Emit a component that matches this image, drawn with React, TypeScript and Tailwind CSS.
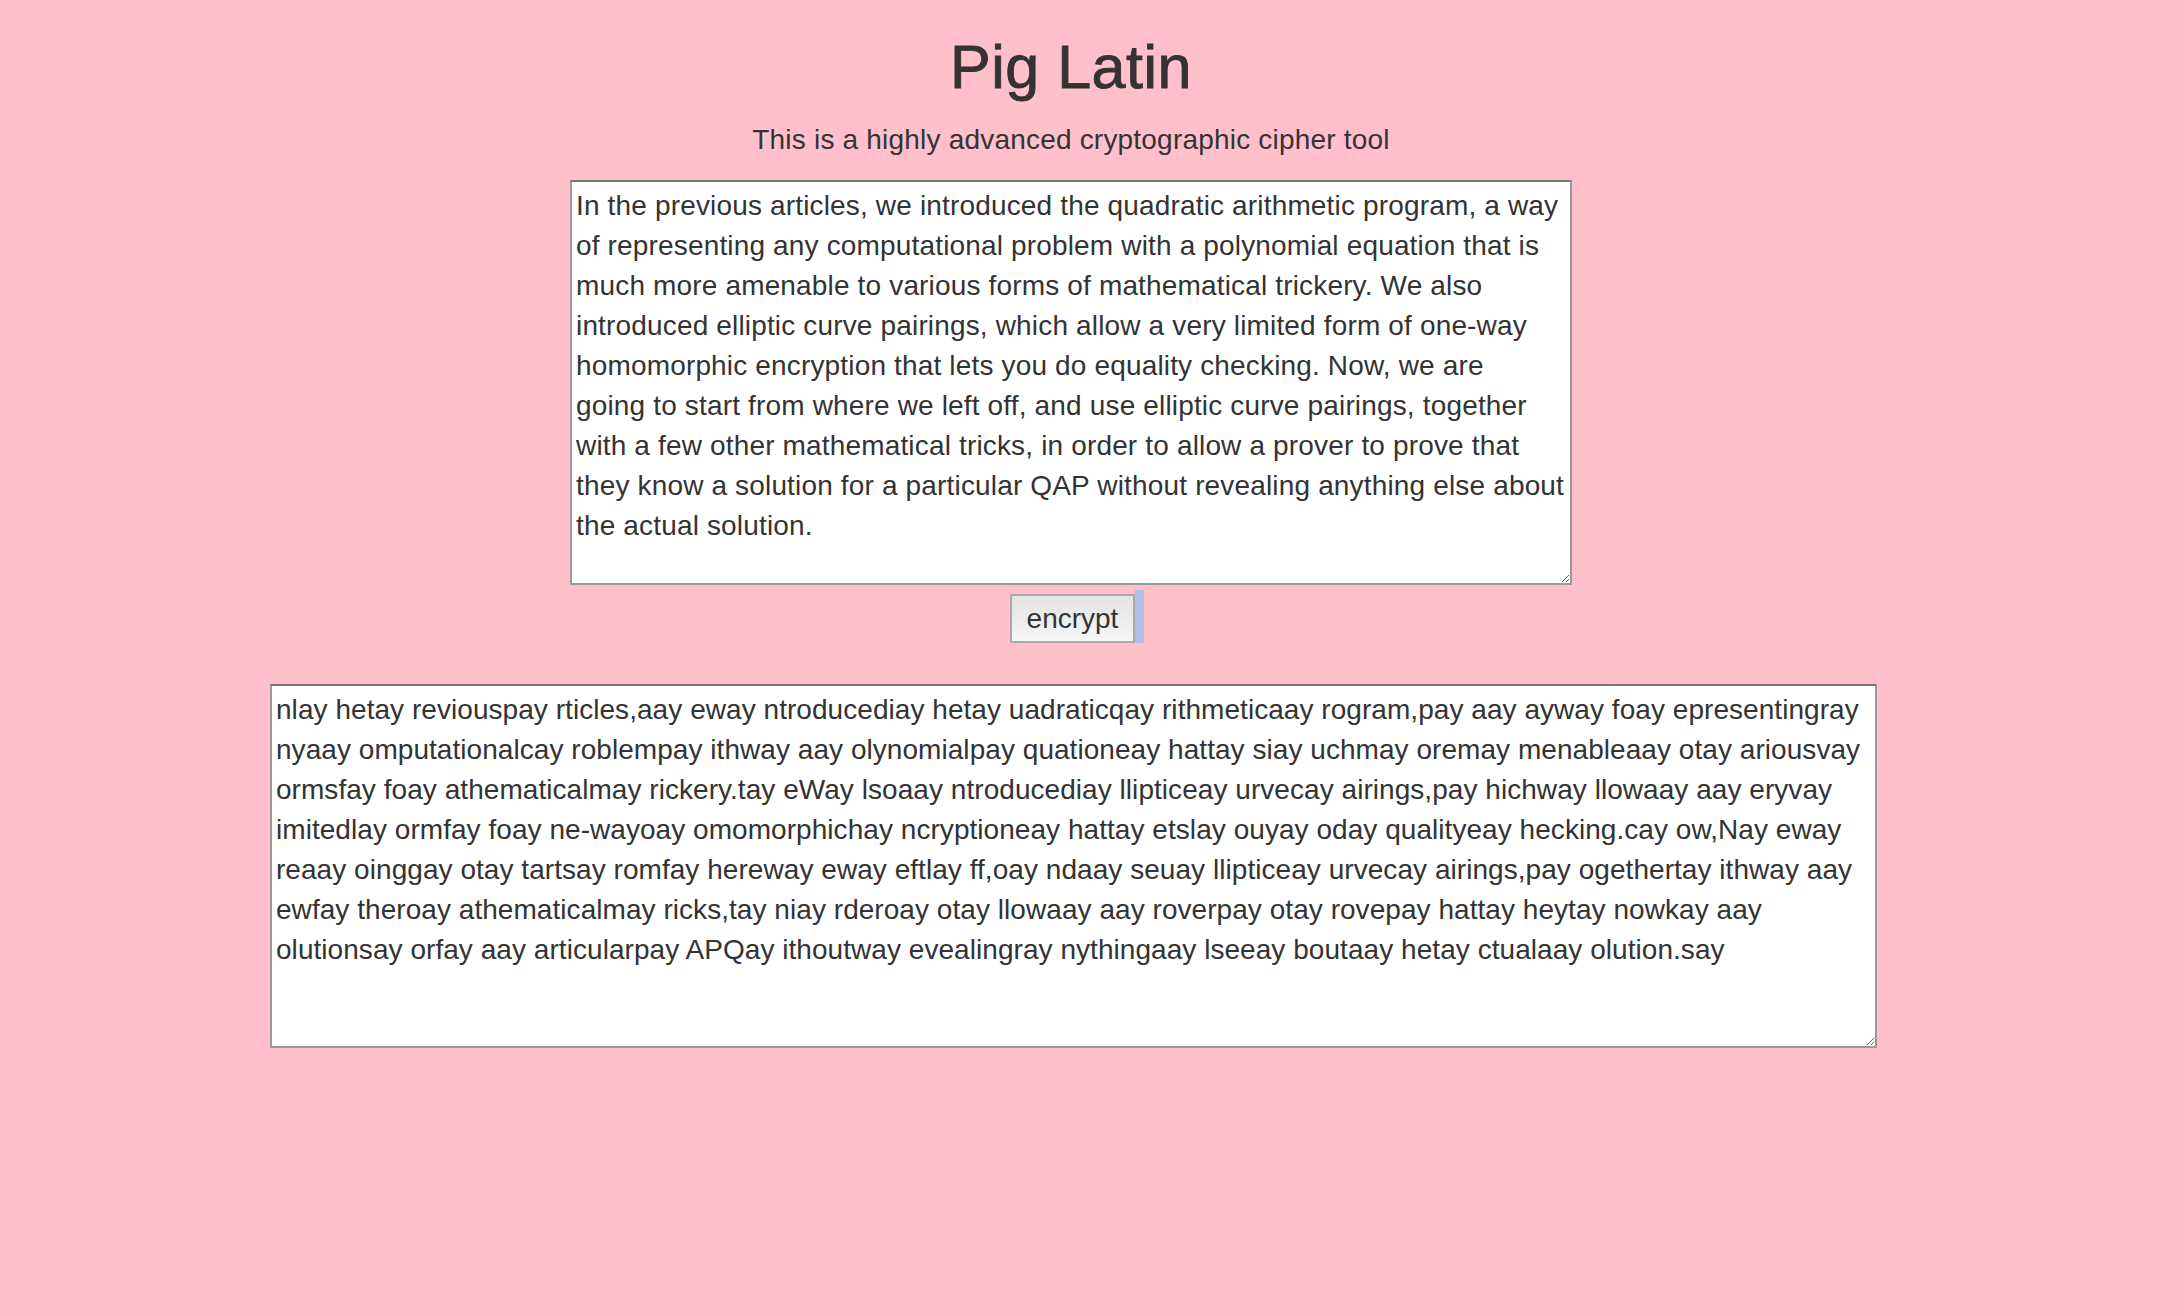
import React from "react";

const INPUT = [
  "In the previous articles, we introduced the quadratic arithmetic program, a way",
  "of representing any computational problem with a polynomial equation that is",
  "much more amenable to various forms of mathematical trickery. We also",
  "introduced elliptic curve pairings, which allow a very limited form of one-way",
  "homomorphic encryption that lets you do equality checking. Now, we are",
  "going to start from where we left off, and use elliptic curve pairings, together",
  "with a few other mathematical tricks, in order to allow a prover to prove that",
  "they know a solution for a particular QAP without revealing anything else about",
  "the actual solution.",
].join("\n");

const OUTPUT =
  "nlay hetay reviouspay rticles,aay eway ntroducediay hetay uadraticqay rithmeticaay rogram,pay aay ayway foay epresentingray nyaay omputationalcay roblempay ithway aay olynomialpay quationeay hattay siay uchmay oremay menableaay otay ariousvay ormsfay foay athematicalmay rickery.tay eWay lsoaay ntroducediay llipticeay urvecay airings,pay hichway llowaay aay eryvay imitedlay ormfay foay ne-wayoay omomorphichay ncryptioneay hattay etslay ouyay oday qualityeay hecking.cay ow,Nay eway reaay oinggay otay tartsay romfay hereway eway eftlay ff,oay ndaay seuay llipticeay urvecay airings,pay ogethertay ithway aay ewfay theroay athematicalmay ricks,tay niay rderoay otay llowaay aay roverpay otay rovepay hattay heytay nowkay aay olutionsay orfay aay articularpay APQay ithoutway evealingray nythingaay lseeay boutaay hetay ctualaay olution.say";

export default function App() {
  return (
    <div
      className="min-h-[1316px] w-full bg-[#ffc0cb] text-[#333333]"
      style={{ fontFamily: '"Liberation Sans", Arial, sans-serif' }}
    >
      <div className="w-[2142px] text-center">
        <h1 className="pt-[34px] text-[61px] leading-[66px] font-normal tracking-[0.5px] [-webkit-text-stroke:0.9px_#333333]">
          Pig Latin
        </h1>
        <p className="mt-[20px] text-[28px] leading-[40px] tracking-[0.2px]">
          This is a highly advanced cryptographic cipher tool
        </p>
        <textarea
          className="mx-auto mt-[20px] block h-[405px] w-[1002px] border-2 border-[#9a9a9a] border-t-[#777777] bg-white p-[4px] text-left text-[28px] leading-[40px] tracking-[0.16px] text-[#333333] outline-none"
          style={{ fontFamily: '"Liberation Sans", Arial, sans-serif' }}
          defaultValue={INPUT}
        />
        <div className="mt-[9px] flex justify-center pl-[3px]">
          <div className="relative">
            <button className="h-[49px] border-2 border-[#aaaaaa] bg-gradient-to-b from-[#e3e3e3] to-[#f6f6f6] px-[15px] text-[28px] leading-[40px] text-[#333333]">
              encrypt
            </button>
            <div className="absolute bottom-0 left-full h-[53px] w-[9px] bg-[#b3bfe9]" />
          </div>
        </div>
        <div className="mt-[41px] flex justify-center pl-[5px]">
          <textarea
            className="block h-[364px] w-[1607px] border-2 border-[#9a9a9a] border-t-[#777777] bg-white p-[4px] text-left text-[28px] leading-[40px] tracking-[0.05px] text-[#333333] outline-none"
            style={{ fontFamily: '"Liberation Sans", Arial, sans-serif' }}
            defaultValue={OUTPUT}
          />
        </div>
      </div>
    </div>
  );
}
